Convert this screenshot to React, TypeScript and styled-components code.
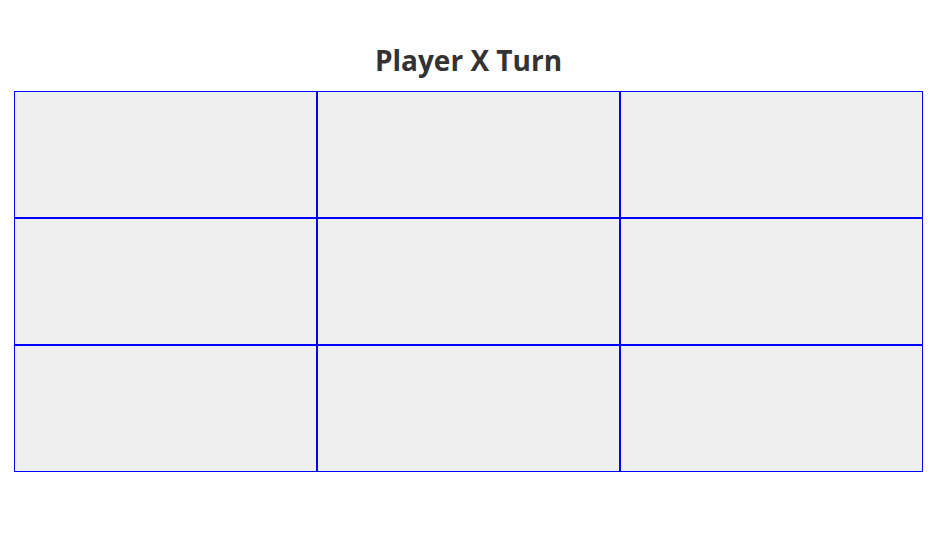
import { createGlobalStyle, styled } from "styled-components";

const GlobalStyle = createGlobalStyle`
  html, body {
    margin: 0;
    padding: 0;
    background: #ffffff;
  }
  body {
    font-family: "Open Sans", "Noto Sans", Arial, sans-serif;
  }
`;

export default function App() {
  const cells = Array.from({ length: 9 }, (_, i) => i);

  return (
    <>
      <GlobalStyle />
      <Page>
        <Title>Player X Turn</Title>
        <Board>
          {cells.map((i) => (
            <Cell key={i} />
          ))}
        </Board>
      </Page>
    </>
  );
}

const Page = styled.div`
  width: 909px;
  padding: 42px 0 0 14px;
`;

const Title = styled.h1`
  margin: 0 0 13px;
  font-size: 28px;
  line-height: 36px;
  font-weight: 700;
  color: #333333;
  text-align: center;
`;

const Board = styled.div`
  display: grid;
  grid-template-columns: repeat(3, 303px);
  grid-template-rows: repeat(3, 127px);
`;

const Cell = styled.button`
  box-sizing: border-box;
  margin: 0;
  padding: 0;
  border: 1px solid #0000ff;
  border-radius: 0;
  background: #efefef;
  cursor: pointer;
`;
